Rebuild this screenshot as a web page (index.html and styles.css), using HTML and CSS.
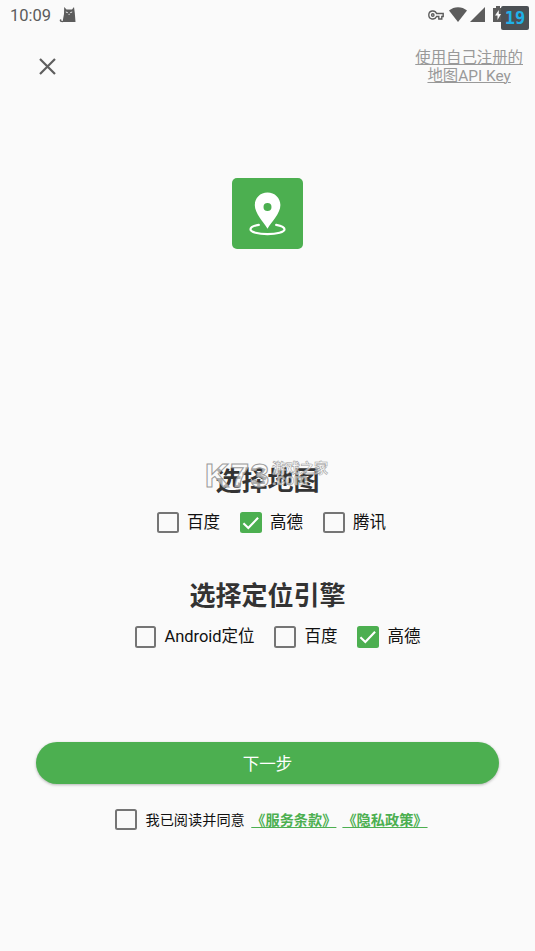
FILE: index.html
```html
<!DOCTYPE html>
<html lang="zh-CN">
<head>
<meta charset="utf-8">
<title>选择地图</title>
<link rel="stylesheet" href="styles.css">
</head>
<body>
<header class="status">
  <span class="time">10:09</span>
  <svg class="cat" width="18" height="18" viewBox="0 0 18 18"><path d="M5.200 1 7.500 3.500h5.500l2-2.500.8 6L16.500 16H5C2.500 16.500.5 15.800.7 14.200c.1-1.200 1.800-1.200 1.800-.1-.8.400-.2 1 1.200.900L5 8z" fill="#5c5c5c"/><path d="M6.800 6l2 .7M11.200 6.700l2-.7M9.500 8.300h1.200" stroke="#fafafa" stroke-width=".9"/></svg>
  <div class="signals">
    <svg width="16" height="10" viewBox="0 0 16 10" fill="none" stroke="#5c5c5c" stroke-width="1.4"><path d="M8.600 3.500C6.800-.6.8.5.8 5s6 5.600 7.800 1.500h2.200V9h3V6.500h1.400v-3z"/><circle cx="4.800" cy="5" r="1.200"/></svg>
    <svg width="18" height="15" viewBox="0 0 18 15"><path d="M0 3.500C5-1 13-1 18 3.500L9 15z" fill="#5c5c5c"/></svg>
    <svg width="15" height="15" viewBox="0 0 15 15"><path d="M15 0v15H0z" fill="#5c5c5c"/></svg>
    <svg class="battery" width="10" height="16" viewBox="0 0 10 16"><path d="M3 0h4v2h3v14H0V2h3z" fill="#5c5c5c"/><path d="M5.800 4 2 9.500h2.500V14L8 8H5.800z" fill="#fafafa"/></svg>
  </div>
  <span class="fps">19</span>
</header>
<nav class="top">
  <svg class="close" width="17" height="17" viewBox="0 0 17 17"><path d="M1 1 16 16M16 1 1 16" stroke="#5e5e5e" stroke-width="2.200"/></svg>
  <a class="key">使用自己注册的<br>地图API Key</a>
</nav>
<main>
  <div class="logo">
    <svg width="71" height="71" viewBox="0 0 71 71"><path d="M35.500 14.500c-7.300 0-12.700 5.500-12.700 12.600 0 8.500 8.700 17 12.700 23.700 4-6.700 12.900-15.200 12.900-23.700 0-7.100-5.600-12.600-12.900-12.600zm0 10.600a4 4 0 1 1 0 8 4 4 0 0 1 0-8z" fill="#fff" fill-rule="evenodd"/><path d="M26.800 46.800c-5.500 1-8.300 2.700-8.300 4.500 0 2.800 7.500 4.900 17 4.900s17-2.100 17-4.900c0-1.800-2.800-3.500-8.300-4.500" fill="none" stroke="#fff" stroke-width="2.200" stroke-linecap="round"/></svg>
  </div>
  <section class="group">
    <h1>选择地图
      <span class="mark"><b>K73</b><span class="site"><span>游戏之家</span><span class="dom">.com</span></span></span>
    </h1>
    <div class="options">
      <label><i class="box"></i>百度</label>
      <label><svg class="box on" viewBox="0 0 22 22"><path d="M3.500 11.500 8.500 16.300 18.500 6"/></svg>高德</label>
      <label><i class="box"></i>腾讯</label>
    </div>
  </section>
  <section class="group">
    <h1>选择定位引擎</h1>
    <div class="options engine">
      <label><i class="box"></i>Android定位</label>
      <label><i class="box"></i>百度</label>
      <label><svg class="box on" viewBox="0 0 22 22"><path d="M3.500 11.500 8.500 16.300 18.500 6"/></svg>高德</label>
    </div>
  </section>
  <button class="next">下一步</button>
  <div class="agree"><i class="box"></i><span class="read">我已阅读并同意</span><a>《服务条款》</a><a>《隐私政策》</a></div>
</main>
</body>
</html>
```
FILE: styles.css
```css
* { box-sizing: border-box; }
body {
  margin: 0;
  height: 951px;
  overflow: hidden;
  background: #fafafa;
  color: #111;
  font-family: Roboto, "Noto Sans CJK SC", sans-serif;
}
svg { display: block; flex: none; }
.status {
  display: flex;
  align-items: center;
  height: 30px;
  padding-left: 10px;
  position: relative;
}
.time { font-size: 16.5px; color: #5c5c5c; width: 49px; }
.cat { margin-bottom: 1px; }
.signals { display: flex; align-items: center; gap: 3px; margin-left: auto; padding-right: 33px; margin-bottom: 2px; }
.signals svg:first-child { margin-right: 2px; margin-top: 2px; }
.battery { margin-left: 5px; margin-right: -1px; }
.fps {
  position: absolute;
  left: 501px;
  top: 6px;
  width: 28px;
  height: 24px;
  border-radius: 2px;
  background: #4b5054;
  color: #20b1e8;
  font: bold 17px/24px "DejaVu Sans Mono", monospace;
  text-align: center;
}
.top {
  display: flex;
  justify-content: space-between;
  align-items: flex-start;
  height: 148.400px;
  padding: 18px 12px 0 39px;
}
.close { margin-top: 10px; }
.key {
  margin-top: .5px;
  color: #999;
  font-size: 15.4px;
  line-height: 18px;
  text-align: center;
  text-decoration: underline;
  text-decoration-thickness: 1px;
  text-underline-offset: 1px;
}
main { display: flex; flex-direction: column; align-items: center; }
.logo { width: 71px; height: 71px; border-radius: 5px; background: #4caf50; margin-bottom: 212px; }
.group { height: 114.500px; }
h1 {
  position: relative;
  margin: 0;
  height: 40px;
  font-size: 26px;
  line-height: 40px;
  font-weight: bold;
  text-align: center;
  color: #333;
}
.options {
  display: flex;
  justify-content: center;
  gap: 20px;
  margin-top: 10.200px;
  padding-left: 8px;
}
.options.engine { padding-left: 20px; }
.engine label:first-child { letter-spacing: -.05px; }
label { display: flex; align-items: center; gap: 8.500px; font-size: 16.500px; line-height: 22px; white-space: nowrap; }
.box { flex: none; width: 21.500px; height: 21.500px; border: 2px solid #757575; border-radius: 2.500px; }
.box.on { border: 0; background: #4caf50; }
.box.on path { fill: none; stroke: #fff; stroke-width: 2.200; }
.mark {
  position: absolute;
  left: 54px;
  top: 0;
  display: flex;
  color: rgba(250, 250, 250, .65);
  -webkit-text-stroke: 1px #999;
  white-space: nowrap;
}
.mark b { width: 69px; font: bold 34px/28px "Liberation Sans", sans-serif; letter-spacing: 1px; }
.site { display: flex; flex-direction: column; font-size: 14px; line-height: 14px; text-align: left; -webkit-text-stroke-width: .5px; }
.dom { font-size: 16px; line-height: 10px; }
.next {
  width: 463px;
  height: 42.500px;
  margin-top: 51.600px;
  border: 0;
  border-radius: 22px;
  background: #4caf50;
  color: #fff;
  font: 16.500px "Noto Sans CJK SC", sans-serif;
  box-shadow: 0 1px 3px rgba(0, 0, 0, .28);
}
.agree { display: flex; align-items: center; margin-top: 24.500px; padding-left: 8px; font-size: 14.200px; }
.read { margin: 0 6.500px 0 8.500px; }
.agree span, .agree a { margin-top: -1px; }
.agree a { color: #4caf50; font-weight: bold; text-decoration: underline; text-decoration-thickness: 1px; text-underline-offset: 2px; }
.agree a + a { margin-left: 6px; }
```
